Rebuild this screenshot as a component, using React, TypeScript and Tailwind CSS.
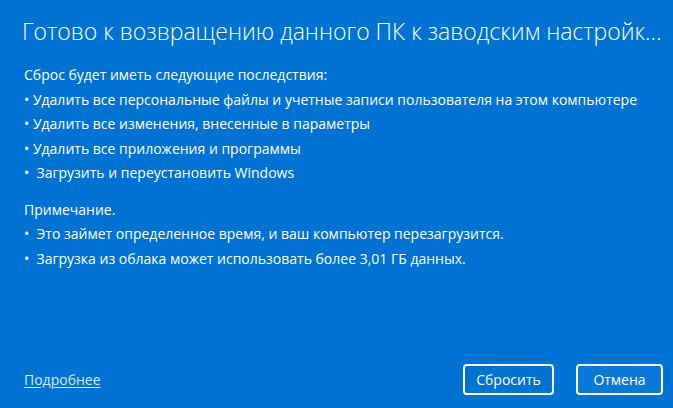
export default function App() {
  return (
    <div
      className="flex h-[408px] w-[673px] flex-col bg-[#0072d4] text-white"
      style={{ fontFamily: '"Open Sans", "Noto Sans", sans-serif' }}
    >
      <h1 className="mt-[15px] ml-[22px] whitespace-nowrap text-[23px] font-light leading-[32px]">
        Готово к возвращению данного ПК к заводским настройк...
      </h1>

      <div className="mt-[16px] ml-[24px] text-[14px] leading-[24.5px]">
        <p>Сброс будет иметь следующие последствия:</p>
        <ul>
          <li>• Удалить все персональные файлы и учетные записи пользователя на этом компьютере</li>
          <li>• Удалить все изменения, внесенные в параметры</li>
          <li>• Удалить все приложения и программы</li>
          <li>•&nbsp; Загрузить и переустановить Windows</li>
        </ul>

        <p className="mt-[12px]">Примечание.</p>
        <ul>
          <li>•&nbsp; Это займет определенное время, и ваш компьютер перезагрузится.</li>
          <li>•&nbsp; Загрузка из облака может использовать более 3,01 ГБ данных.</li>
        </ul>
      </div>

      <div className="mt-auto mb-[13px] flex items-center pl-[24px] pr-[10px]">
        <a href="#" className="text-[14px] text-[#d6e8fa] underline underline-offset-2">
          Подробнее
        </a>
        <div className="ml-auto flex gap-[22px]">
          <button className="h-[31px] w-[91px] rounded-[4px] border-2 border-white text-[14px]">
            Сбросить
          </button>
          <button className="h-[31px] w-[87px] rounded-[4px] border-2 border-white bg-[#0a78d8] text-[14px]">
            Отмена
          </button>
        </div>
      </div>
    </div>
  );
}
